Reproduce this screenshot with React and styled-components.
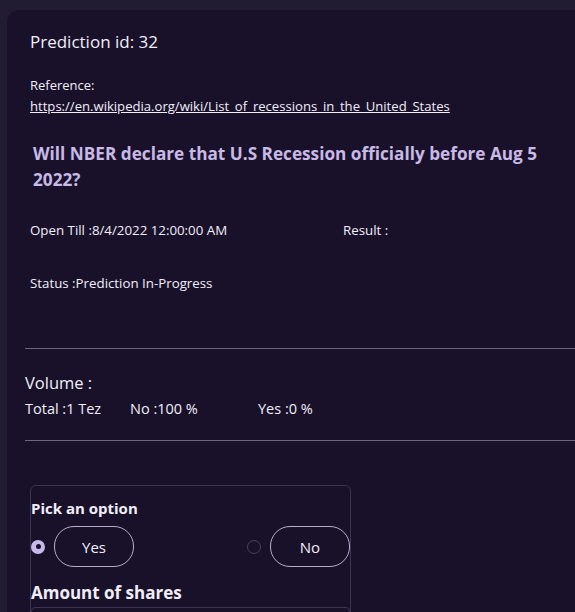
import React, { useState } from "react";
import styled, { createGlobalStyle } from "styled-components";

const GlobalStyle = createGlobalStyle`
  html, body {
    margin: 0;
    padding: 0;
    background: #211c32;
    overflow: hidden;
    font-family: "Open Sans", Lato, sans-serif;
    color: #f1eef8;
  }
`;

const Page = styled.div`
  width: 575px;
  height: 612px;
  padding: 10px 0 0 7px;
  box-sizing: border-box;
  overflow: hidden;
`;

const Card = styled.div`
  width: 620px;
  min-height: 700px;
  background: #19112a;
  border-radius: 12px;
  padding: 20px 0 0 18px;
  box-sizing: border-box;
`;

const Title = styled.div`
  font-size: 17px;
  line-height: 24px;
  padding-left: 5px;
`;

const RefLabel = styled.div`
  font-size: 13px;
  line-height: 21px;
  margin-top: 21px;
  padding-left: 5px;
`;

const RefLink = styled.a`
  display: block;
  font-size: 13.1px;
  line-height: 21px;
  color: #f1eef8;
  text-decoration: underline;
  padding-left: 5px;
`;

const Question = styled.h2`
  width: 520px;
  margin: 24px 0 0 8px;
  font-size: 17.2px;
  line-height: 26px;
  font-weight: 700;
  color: #c8b9e6;
`;

const InfoRow = styled.div`
  display: flex;
  font-size: 13.3px;
  line-height: 20px;
  padding-left: 5px;
  margin-top: ${(p) => p.$top}px;
`;

const InfoCell = styled.div`
  width: ${(p) => p.$width || "auto"};
`;

const Divider = styled.hr`
  border: none;
  border-top: 1px solid #6c6680;
  margin: ${(p) => p.$top}px 0 0 0;
`;

const VolumeTitle = styled.div`
  font-size: 16.5px;
  line-height: 22px;
  margin-top: 23px;
`;

const VolumeRow = styled.div`
  display: flex;
  font-size: 14.5px;
  line-height: 20px;
  margin-top: 5px;
`;

const VolumeCell = styled.div`
  width: ${(p) => p.$width};
`;

const OptionBox = styled.div`
  width: 321px;
  margin: 44px 0 0 5px;
  border: 1px solid #3b3452;
  border-radius: 6px;
  padding: 12px 0 0 0;
  box-sizing: border-box;
  height: 140px;
`;

const BoxTitle = styled.div`
  font-size: 15px;
  font-weight: 700;
  line-height: 20px;
`;

const OptionRow = styled.div`
  display: flex;
  justify-content: space-between;
  margin-top: 8px;
`;

const Option = styled.label`
  display: flex;
  align-items: center;
  gap: 9px;
  cursor: pointer;
`;

const Radio = styled.span`
  width: 14px;
  height: 14px;
  border-radius: 50%;
  box-sizing: border-box;
  background: ${(p) => (p.$checked ? "#c9b9e8" : "transparent")};
  border: ${(p) => (p.$checked ? "4px solid #c9b9e8" : "1.5px solid #4a4360")};
  position: relative;
  &::after {
    content: "";
    display: ${(p) => (p.$checked ? "block" : "none")};
    position: absolute;
    inset: 0;
    margin: auto;
    width: 5px;
    height: 5px;
    border-radius: 50%;
    background: #19112a;
  }
`;

const PillButton = styled.button`
  width: 80px;
  height: 41px;
  border-radius: 20px;
  border: 1px solid #b7aecb;
  background: transparent;
  color: #f1eef8;
  font-family: "Open Sans", Lato, sans-serif;
  font-size: 15px;
`;

const SharesTitle = styled.div`
  font-size: 17px;
  font-weight: 700;
  line-height: 24px;
  margin-top: 14px;
`;

const SharesInput = styled.div`
  margin-top: 2px;
  height: 30px;
  border: 1px solid #3b3452;
  border-radius: 4px;
`;

export default function App() {
  const [pick, setPick] = useState("yes");
  return (
    <>
      <GlobalStyle />
      <Page>
        <Card>
          <Title>Prediction id: 32</Title>
          <RefLabel>Reference:</RefLabel>
          <RefLink href="#">
            https://en.wikipedia.org/wiki/List_of_recessions_in_the_United_States
          </RefLink>
          <Question>
            Will NBER declare that U.S Recession officially before Aug 5 2022?
          </Question>
          <InfoRow $top={27}>
            <InfoCell $width="313px">Open Till :8/4/2022 12:00:00 AM</InfoCell>
            <InfoCell>Result :</InfoCell>
          </InfoRow>
          <InfoRow $top={33}>
            <InfoCell>Status :Prediction In-Progress</InfoCell>
          </InfoRow>
          <Divider $top={55} />
          <VolumeTitle>Volume :</VolumeTitle>
          <VolumeRow>
            <VolumeCell $width="105px">Total :1 Tez</VolumeCell>
            <VolumeCell $width="128px">No :100 %</VolumeCell>
            <VolumeCell $width="100px">Yes :0 %</VolumeCell>
          </VolumeRow>
          <Divider $top={21} />
          <OptionBox>
            <BoxTitle>Pick an option</BoxTitle>
            <OptionRow>
              <Option onClick={() => setPick("yes")}>
                <Radio $checked={pick === "yes"} />
                <PillButton>Yes</PillButton>
              </Option>
              <Option onClick={() => setPick("no")}>
                <Radio $checked={pick === "no"} />
                <PillButton>No</PillButton>
              </Option>
            </OptionRow>
            <SharesTitle>Amount of shares</SharesTitle>
            <SharesInput />
          </OptionBox>
        </Card>
      </Page>
    </>
  );
}
